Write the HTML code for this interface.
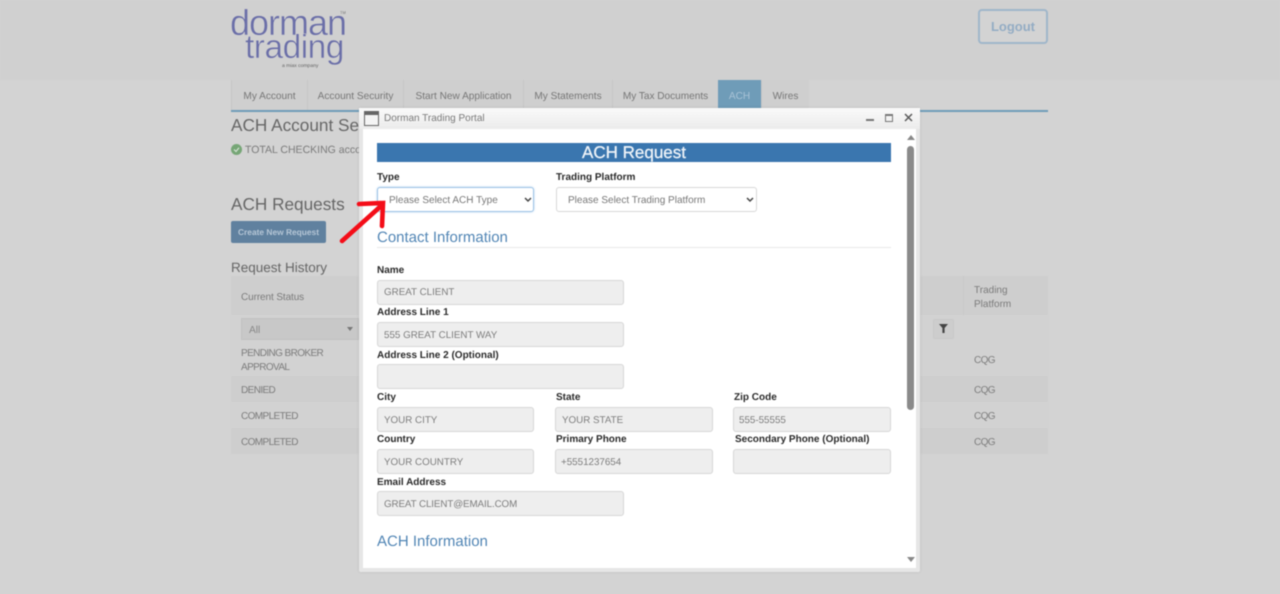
<!DOCTYPE html>
<html><head><meta charset="utf-8"><style>
html,body{margin:0;padding:0;width:1280px;height:594px;overflow:hidden;background:#d3d3d3;font-family:"Liberation Sans",sans-serif;text-rendering:geometricPrecision}
#w{position:absolute;left:0;top:0;width:1280px;height:594px;overflow:hidden;filter:blur(.45px)}
#w div{position:absolute;white-space:nowrap;box-sizing:border-box}
.tab{top:80px;height:30px;background:#cfcfcf;border-left:1px solid #c6c6c6;color:#777;font-size:10.1px;line-height:34px;text-align:center}
.g{color:#7b7b7b;font-size:10px}
.u{letter-spacing:-.6px}
.h{color:#666;font-size:17.2px;line-height:20px}
.l{font-size:10px;font-weight:bold;color:#2a2a2a;line-height:12px}
.i{height:25px;background:#eee;border:1px solid #d6d6d6;border-radius:3px;color:#7d7d7d;font-size:9.8px;line-height:25px;padding-left:6px}
.s{height:25px;background:#fff;border:1px solid #d8d8d8;border-radius:3px;color:#777;font-size:10px;line-height:25px;padding-left:11px}
.sec{color:#5286b5;font-size:15px;line-height:18px}
.row{left:231px;width:817px;background:#cecece}
.logo{color:#6a6ea8;-webkit-text-stroke:.5px #d0d0d0;line-height:40px}
</style></head><body><div id="w">
<div style="left:0;top:0;width:1280px;height:80px;background:#d0d0d0"></div>
<div class="logo" style="left:230px;top:2.5px;font-size:36px;letter-spacing:-1px">dorman</div>
<div class="logo" style="left:245px;top:27.5px;font-size:33.5px;letter-spacing:-.5px">trading</div>
<div style="left:282px;top:63px;font-size:5px;line-height:6px;color:#666">a miax company</div>
<div style="left:340px;top:10px;font-size:4px;line-height:5px;color:#777">TM</div>
<div style="left:978px;top:9px;width:70px;height:35px;border:2px solid #9fb6ca;border-radius:4px;color:#93acc4;font-size:13px;font-weight:bold;line-height:31px;text-align:center;background:#d3d3d3">Logout</div>

<div class="tab" style="left:231px;width:76px">My Account</div>
<div class="tab" style="left:307px;width:96px">Account Security</div>
<div class="tab" style="left:403px;width:120px">Start New Application</div>
<div class="tab" style="left:523px;width:89px">My Statements</div>
<div class="tab" style="left:612px;width:106px;letter-spacing:-.02px">My Tax Documents</div>
<div class="tab" style="left:718px;width:43px;background:#6f9cb8;color:#a9c3d6;border:0">ACH</div>
<div class="tab" style="left:761px;width:48px">Wires</div>
<div style="left:231px;top:110px;width:817px;height:2px;background:#6f9cb8"></div>

<div class="h" style="left:231px;top:115px;width:128px;overflow:hidden">ACH Account Settings</div>
<div style="left:231px;top:144px;width:11px;height:11px;border-radius:50%;background:#76a676"></div>
<svg style="position:absolute;left:231px;top:144px" width="11" height="11" viewBox="0 0 11 11"><path d="M3 5.5L5 7.5L8 3.8" fill="none" stroke="#d5e3d5" stroke-width="1.2"/></svg>
<div class="g" style="left:245px;top:143px;line-height:14px;width:114px;overflow:hidden;font-size:10.5px">TOTAL CHECKING account</div>
<div class="h" style="left:231px;top:194px">ACH Requests</div>
<div style="left:231px;top:221px;width:95px;height:22px;background:#60819f;border-radius:2px;color:#b5c6d6;font-size:8.4px;font-weight:bold;line-height:22px;text-align:center">Create New Request</div>
<div style="left:231px;top:260px;font-size:13.5px;line-height:16px;color:#666">Request History</div>

<div class="row" style="top:276px;height:39px"></div>
<div class="row" style="top:315px;height:27px;background:#d2d2d2"></div>
<div class="row" style="top:342px;height:34px;background:#d2d2d2"></div>
<div class="row" style="top:376px;height:26px"></div>
<div class="row" style="top:402px;height:26px;background:#d2d2d2"></div>
<div class="row" style="top:428px;height:26px"></div>
<div style="left:963px;top:276px;width:1px;height:39px;background:#c9c9c9"></div>
<div class="g" style="left:241px;top:291px;line-height:14px;letter-spacing:-.1px">Current Status</div>
<div style="left:241px;top:318px;width:118px;height:22px;background:#c8c8c8;border:1px solid #c2c2c2;color:#888;font-size:10.2px;line-height:23px;padding-left:7px">All</div>
<div style="left:347px;top:327px;width:0;height:0;border-left:3px solid transparent;border-right:3px solid transparent;border-top:4px solid #777"></div>
<div class="g u" style="left:241px;top:347px;line-height:14px">PENDING BROKER<br>APPROVAL</div>
<div class="g u" style="left:241px;top:384px;line-height:14px">DENIED</div>
<div class="g u" style="left:241px;top:410px;line-height:14px">COMPLETED</div>
<div class="g u" style="left:241px;top:436px;line-height:14px">COMPLETED</div>
<div class="g" style="left:974px;top:284px;line-height:14px">Trading<br>Platform</div>
<div class="g u" style="left:974px;top:354px;line-height:14px">CQG</div>
<div class="g u" style="left:974px;top:384px;line-height:14px">CQG</div>
<div class="g u" style="left:974px;top:410px;line-height:14px">CQG</div>
<div class="g u" style="left:974px;top:436px;line-height:14px">CQG</div>
<div style="left:933px;top:319px;width:21px;height:20px;background:#cdcdcd;border:1px solid #c8c8c8;border-radius:2px"></div>
<svg style="position:absolute;left:939px;top:324px" width="10" height="10" viewBox="0 0 10 10"><path d="M0 0H9L5.6 4V9H3.4V4Z" fill="#444"/></svg>

<!-- window -->
<div style="left:359px;top:108px;width:561px;height:464px;background:#e6e6e6;border-radius:2px;box-shadow:0 0 3px rgba(0,0,0,.1)"></div>
<div style="left:359px;top:108px;width:561px;height:21px;background:linear-gradient(#fafafa,#ebebeb)"></div>
<div style="left:363px;top:129px;width:553px;height:439px;background:#fff"></div>
<div style="left:364px;top:111px;width:15px;height:15px;border:1.5px solid #666;border-top-width:4px;background:#f4f4f4"></div>
<div style="left:384px;top:112px;font-size:10px;line-height:13px;color:#7a7a7a">Dorman Trading Portal</div>
<div style="left:866px;top:119px;width:8px;height:1.5px;background:#777"></div>
<div style="left:885px;top:114px;width:8px;height:8px;border:1px solid #777;border-top-width:2.5px"></div>
<svg style="position:absolute;left:904px;top:113px" width="9" height="9" viewBox="0 0 9 9"><path d="M1 1L8 8M8 1L1 8" stroke="#5a5a5a" stroke-width="1.5"/></svg>

<div style="left:377px;top:143px;width:514px;height:19px;background:#3a76af;color:#eef3f8;font-size:17px;line-height:19px;text-align:center;-webkit-text-stroke:.3px #eef3f8">ACH Request</div>
<div class="l" style="left:377px;top:172px">Type</div>
<div class="l" style="left:556px;top:172px">Trading Platform</div>
<div class="s" style="left:377px;top:187px;width:157px;border-color:#9cc3e6;box-shadow:0 0 2px #b5d3ee">Please Select ACH Type</div>
<svg style="position:absolute;left:524px;top:197px" width="8" height="6" viewBox="0 0 8 6"><path d="M1 1L4 4L7 1" fill="none" stroke="#444" stroke-width="1.5"/></svg>
<div class="s" style="left:556px;top:187px;width:201px">Please Select Trading Platform</div>
<svg style="position:absolute;left:746px;top:197px" width="8" height="6" viewBox="0 0 8 6"><path d="M1 1L4 4L7 1" fill="none" stroke="#444" stroke-width="1.5"/></svg>
<div class="sec" style="left:377px;top:229px">Contact Information</div>
<div style="left:377px;top:247px;width:514px;height:1px;background:#e8e8e8"></div>

<div class="l" style="left:377px;top:265px">Name</div>
<div class="i" style="left:377px;top:280px;width:247px;line-height:23px">GREAT CLIENT</div>
<div class="l" style="left:377px;top:307px">Address Line 1</div>
<div class="i" style="left:377px;top:322px;width:247px">555 GREAT CLIENT WAY</div>
<div class="l" style="left:377px;top:350px">Address Line 2 (Optional)</div>
<div class="i" style="left:377px;top:364px;width:247px"></div>
<div class="l" style="left:377px;top:392px">City</div>
<div class="l" style="left:556px;top:392px">State</div>
<div class="l" style="left:734px;top:392px">Zip Code</div>
<div class="i" style="left:377px;top:407px;width:157px">YOUR CITY</div>
<div class="i" style="left:555px;top:407px;width:158px">YOUR STATE</div>
<div class="i" style="left:733px;top:407px;width:158px;padding-left:5px">555-55555</div>
<div class="l" style="left:377px;top:434px">Country</div>
<div class="l" style="left:556px;top:434px">Primary Phone</div>
<div class="l" style="left:735px;top:434px">Secondary Phone (Optional)</div>
<div class="i" style="left:377px;top:449px;width:157px">YOUR COUNTRY</div>
<div class="i" style="left:555px;top:449px;width:158px;padding-left:5px">+5551237654</div>
<div class="i" style="left:733px;top:449px;width:158px"></div>
<div class="l" style="left:377px;top:477px">Email Address</div>
<div class="i" style="left:377px;top:491px;width:247px;letter-spacing:-.1px">GREAT CLIENT@EMAIL.COM</div>
<div class="sec" style="left:377px;top:533px">ACH Information</div>

<div style="left:907px;top:135px;width:0;height:0;border-left:4px solid transparent;border-right:4px solid transparent;border-bottom:5px solid #888"></div>
<div style="left:907px;top:146px;width:7px;height:264px;background:#8a8a8a;border-radius:4px"></div>
<div style="left:907px;top:557px;width:0;height:0;border-left:4px solid transparent;border-right:4px solid transparent;border-top:5px solid #888"></div>

<svg style="position:absolute;left:335px;top:195px" width="55" height="52" viewBox="0 0 55 52"><path d="M7 46L46 11M24 9L48 8L47 31" fill="none" stroke="#f40d18" stroke-width="4.6" stroke-linecap="round" stroke-linejoin="miter"/></svg>
</div></body></html>
